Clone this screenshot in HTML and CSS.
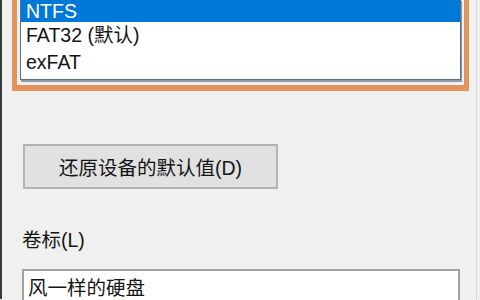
FILE: index.html
```html
<!DOCTYPE html>
<html>
<head>
	<title>格式化</title>
	<link rel="stylesheet" href="styles.css">
</head>
<body>
<div class="window">
	<div class="highlight">
		<ul class="droplist">
			<li class="selected">NTFS</li>
			<li>FAT32 (默认)</li>
			<li>exFAT</li>
		</ul>
	</div>

	<div class="actions">
		<button class="btn">还原设备的默认值(D)</button>
	</div>

	<label class="label">卷标(L)</label>
	<div class="field">风一样的硬盘</div>
</div>
</body>
</html>
```

FILE: styles.css
```css
html, body {
	margin: 0;
	height: 100%;
	overflow: hidden;
}

body {
	background: #f0f0f0;
	font-family: "Liberation Sans", "Noto Sans CJK SC", sans-serif;
	font-size: 19.5px;
	color: #141414;
}

.window {
	height: 100%;
	border-left: 2px solid #3a3a3a;
	border-right: 1px solid #d9d9d9;
	margin-right: 3px;
	box-sizing: border-box;
}

.highlight {
	margin: -1px 0 0 10px;
	width: 457px;
	box-sizing: border-box;
	border: 5px solid #e5935d;
	border-top: 0;
	border-bottom-width: 6px;
	padding: 0 3px 5px 3px;
}

.droplist {
	list-style: none;
	margin: 0;
	padding: 0 0 3px 0;
	background: #fff;
	border: 1px solid #55708a;
	box-shadow: 1px 2px 0 #8c9aa8;
}

.droplist li {
	height: 27px;
	line-height: 27px;
	padding-left: 5px;
}

.droplist .selected {
	height: 22px;
	line-height: 22px;
	background: #0078d7;
	color: #fff;
}

.actions {
	padding: 53px 0 0 21px;
}

.btn {
	display: block;
	width: 255px;
	height: 45px;
	margin: 0;
	font: inherit;
	color: #141414;
	background: #e1e1e1;
	border: 2px solid #b3b3b3;
}

.label {
	display: block;
	margin: 38px 0 0 20px;
	line-height: 26px;
}

.field {
	margin: 16px 0 0 20px;
	width: 438px;
	height: 40px;
	box-sizing: border-box;
	background: #fff;
	border: 2px solid #a2a2a2;
	padding: 4px 0 0 4px;
	line-height: 26px;
}
```
